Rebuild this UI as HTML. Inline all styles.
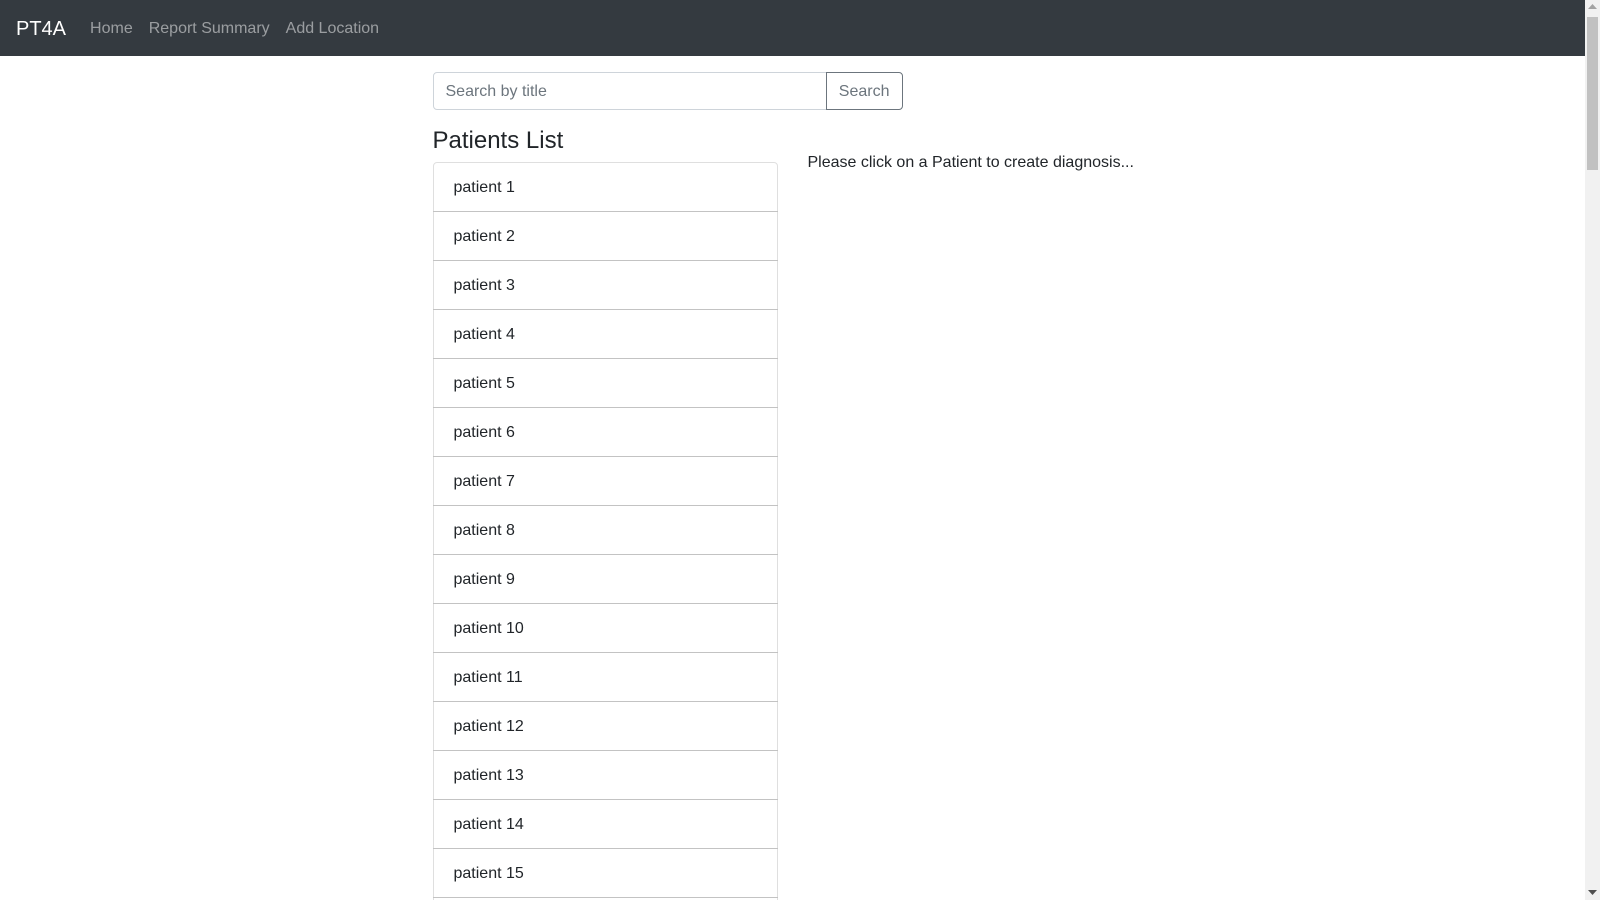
<!DOCTYPE html>
<html><head><meta charset="utf-8"><style>
*{box-sizing:border-box}
html,body{margin:0;padding:0;overflow:hidden;height:900px}
body{font-family:"Liberation Sans",Arial,sans-serif;font-size:16px;line-height:1.5;color:#212529;background:#fff;width:1600px}
.nav{height:56px;background:#343a40;display:flex;align-items:center;padding:2px 16px 0;width:1585px}
.brand{color:#fff;font-size:20px;margin-right:16px;line-height:30px}
.nav a{color:rgba(255,255,255,.5);padding:0 8px;text-decoration:none}
.wrap{width:750px;margin:16px auto 0;position:relative;left:-7.5px;display:flex;flex-wrap:wrap}
.c8{width:500px;padding:0 15px}
.c6{width:375px;padding:0 15px}
.ig{display:flex;margin-bottom:16px;height:38px}
.ig input{flex:1;border:1px solid #ced4da;border-radius:4px 0 0 4px;font:16px "Liberation Sans",sans-serif;padding:7px 12px 5px;color:#495057}
.ig input::placeholder{color:#6c757d}
.ig button{border:1px solid #6c757d;background:#fff;color:#6c757d;border-radius:0 4px 4px 0;font:16px "Liberation Sans",sans-serif;padding:7px 12px 5px;margin-left:-1px}
h4{font-size:24px;font-weight:500;line-height:1.2;margin:1px 0 6px}
ul{list-style:none;margin:0;padding:0}
li{border:1px solid rgba(0,0,0,.125);margin-bottom:-1px;padding:13px 20px 11px;height:50px}
li:first-child{border-radius:4px 4px 0 0}
p{margin:25px 0 0}
.sb{position:fixed;right:0;top:0;width:15px;height:900px;background:#f1f1f1}
.th{position:absolute;left:2px;right:2px;top:17px;height:153px;background:#c1c1c1}
</style></head><body>
<div class="nav"><span class="brand">PT4A</span><a>Home</a><a>Report Summary</a><a>Add Location</a></div>
<div class="wrap">
<div class="c8"><div class="ig"><input placeholder="Search by title"><button>Search</button></div></div>
<div class="c6"><h4>Patients List</h4><ul>
<li>patient 1</li><li>patient 2</li><li>patient 3</li><li>patient 4</li><li>patient 5</li><li>patient 6</li><li>patient 7</li><li>patient 8</li><li>patient 9</li><li>patient 10</li><li>patient 11</li><li>patient 12</li><li>patient 13</li><li>patient 14</li><li>patient 15</li><li>patient 16</li></ul></div>
<div class="c6"><p>Please click on a Patient to create diagnosis...</p></div>
</div>
<div class="sb"><div class="th"></div>
<svg style="position:absolute;left:3px;top:4px" width="9" height="6"><path d="M0 5L4.5 0L9 5Z" fill="#a3a3a3"/></svg>
<svg style="position:absolute;left:3px;bottom:4px" width="9" height="6"><path d="M0 0L4.5 5L9 0Z" fill="#505050"/></svg></div>
</body></html>
